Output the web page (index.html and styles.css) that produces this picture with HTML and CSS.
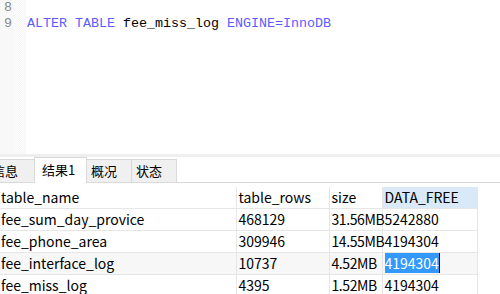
FILE: index.html
```html
<!DOCTYPE html>
<html lang="zh-CN">
  <head>
    <meta charset="UTF-8" />
    <title>fee_miss_log - 查询</title>
    <link rel="stylesheet" href="styles.css">
  </head>
  <body>
    <div class="editor">
      <div class="gutter">
        <div class="line-no">8</div>
        <div class="line-no">9</div>
      </div>
      <div class="fold"></div>
      <div class="code">
        <div class="code-line"></div>
        <div class="code-line"><span class="kw">ALTER TABLE</span> fee_miss_log <span class="kw">ENGINE=InnoDB</span></div>
      </div>
    </div>

    <div class="splitter"></div>

    <div class="tabs">
      <div class="tab first">信息</div>
      <div class="tab active">结果1</div>
      <div class="tab">概况</div>
      <div class="tab">状态</div>
    </div>

    <div class="grid-wrap">
      <table class="grid">
        <thead>
          <tr>
            <th class="c-name">table_name</th>
            <th class="c-rows">table_rows</th>
            <th class="c-size">size</th>
            <th class="c-free sorted">DATA_FREE</th>
          </tr>
        </thead>
        <tbody>
          <tr>
            <td>fee_sum_day_provice</td>
            <td>468129</td>
            <td class="size">31.56MB</td>
            <td>5242880</td>
          </tr>
          <tr>
            <td>fee_phone_area</td>
            <td>309946</td>
            <td class="size">14.55MB</td>
            <td>4194304</td>
          </tr>
          <tr class="current">
            <td>fee_interface_log</td>
            <td>10737</td>
            <td class="size">4.52MB</td>
            <td><span class="selected">4194304</span></td>
          </tr>
          <tr>
            <td>fee_miss_log</td>
            <td>4395</td>
            <td class="size">1.52MB</td>
            <td>4194304</td>
          </tr>
        </tbody>
      </table>
    </div>
  </body>
</html>
```

FILE: styles.css
```css
* {
  margin: 0;
  padding: 0;
  box-sizing: border-box;
}

body {
  width: 500px;
  height: 294px;
  overflow: hidden;
  background-color: white;
  font-family: "Noto Sans CJK SC", sans-serif;
  color: black;
}

/* SQL editor */
.editor {
  height: 154px;
  display: flex;
  font-family: "Liberation Mono", monospace;
  font-size: 13.33px;
  line-height: 16px;
}

.gutter {
  width: 14px;
  background-color: #f8f8f8;
  color: #8a8a8a;
  padding-left: 4px;
}

.fold {
  width: 12px;
  background-color: #fbfbfb;
  background-image: repeating-conic-gradient(#f6f6f6 0 25%, #fdfdfd 0 50%);
  background-size: 2px 2px;
}

.code {
  flex: 1;
  padding-left: 1px;
}

.code-line {
  height: 16px;
  white-space: pre;
}

.kw {
  color: #5c5cff;
}

.splitter {
  height: 3px;
  background-color: #efefef;
}

/* Result tabs */
.tabs {
  display: flex;
  align-items: flex-end;
  height: 26px;
  margin-left: -13px;
  border-bottom: 1px solid #d9d9d9;
  font-size: 13px;
}

.tab {
  width: 46px;
  height: 23px;
  padding-left: 4px;
  line-height: 22px;
  background-color: #f0f0f0;
  border: 1px solid #d9d9d9;
  border-bottom: none;
  margin-right: -1px;
}

.tab.first {
  width: 48px;
}

.tab.active {
  width: 53px;
  height: 26px;
  padding-left: 7px;
  line-height: 24px;
  background-color: white;
  margin-bottom: -1px;
}

/* Result grid */
.grid-wrap {
  padding-top: 4px;
  margin-left: -1px;
}

.grid {
  width: 478px;
  border-collapse: collapse;
  font-size: 14px;
  line-height: 20px;
  table-layout: fixed;
}

.grid th,
.grid td {
  height: 22px;
  padding: 0 0 1px 2px;
  text-align: left;
  font-weight: normal;
  white-space: nowrap;
  border-right: 1px solid #e6e6e6;
  border-bottom: 1px solid #e6e6e6;
}

.grid th {
  height: 21px;
}

.grid td.size {
  letter-spacing: -0.4px;
}

.c-name {
  width: 237px;
}

.c-rows {
  width: 93px;
}

.c-size {
  width: 53px;
}

.c-free {
  width: 95px;
}

.grid th.sorted {
  background-color: #d9e9f8;
}

.grid tr.current td {
  background-color: #f7f7f7;
}

.selected {
  background-color: #3399ff;
  color: white;
  border-right: 1px solid black;
}
```
